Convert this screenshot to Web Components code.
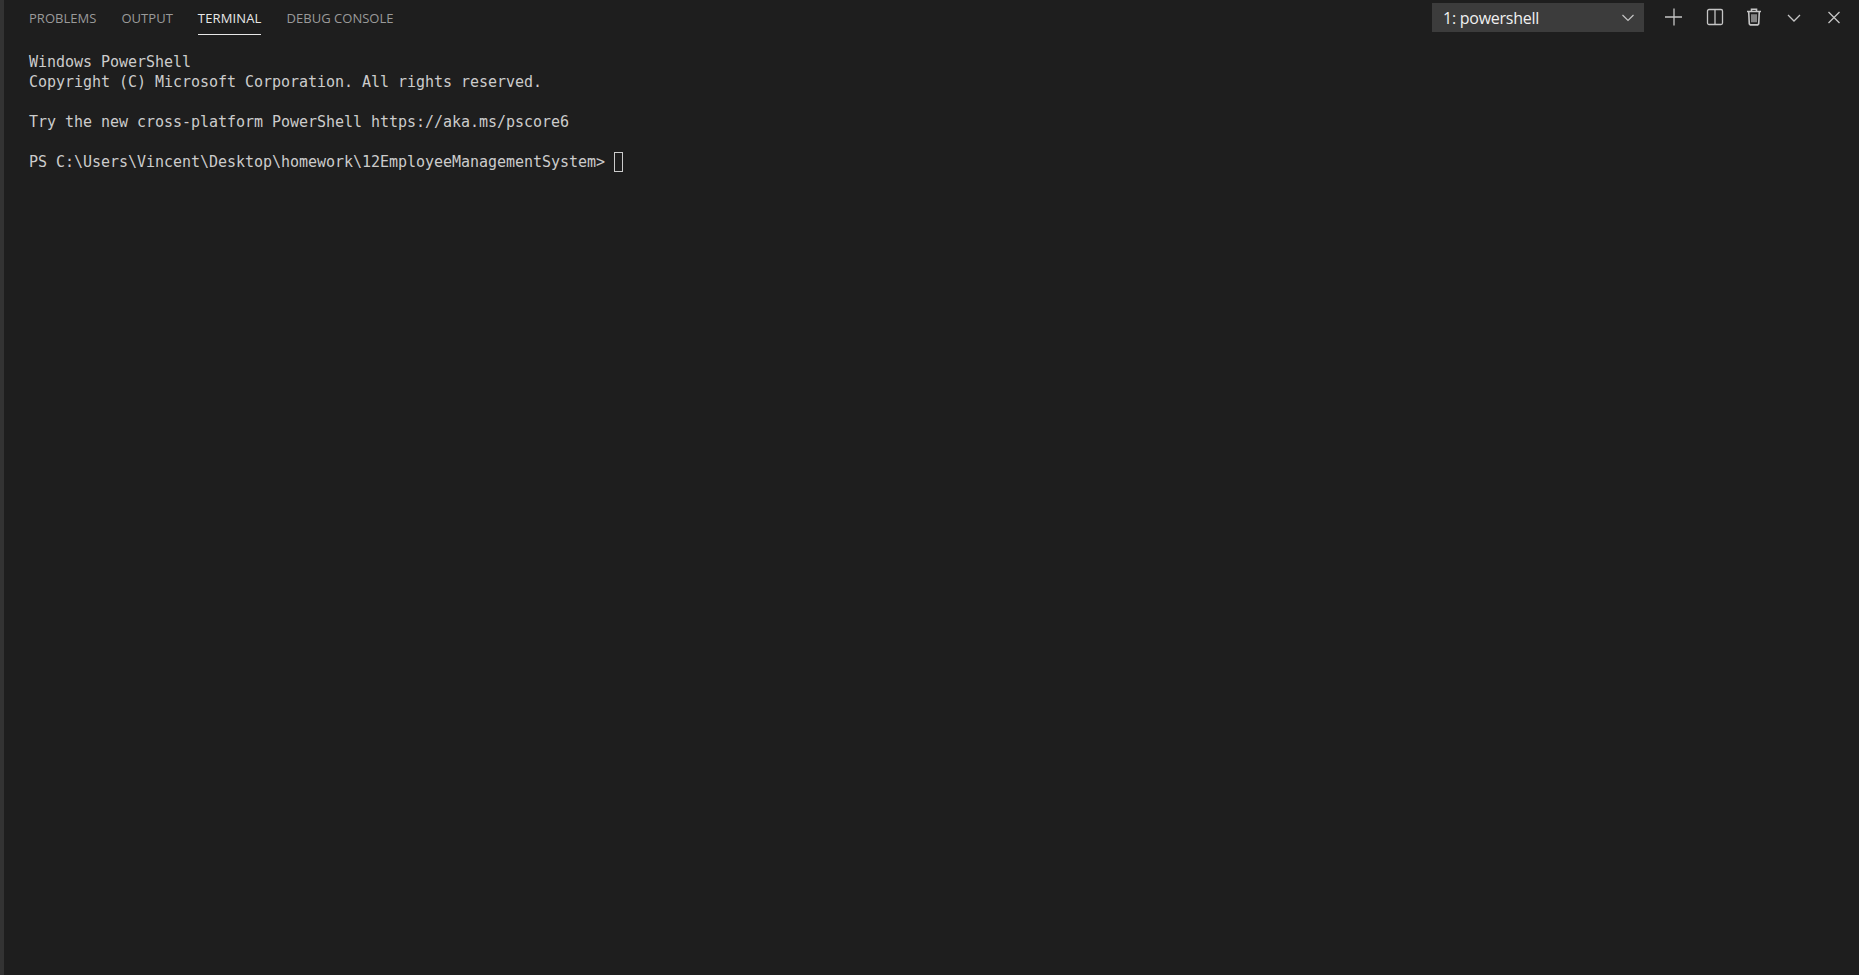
<!DOCTYPE html>
<html>
<head>
<meta charset="utf-8">
<title>Terminal</title>
<style>
  html, body { margin: 0; height: 100%; background: #1e1e1e; overflow: hidden; }
</style>
</head>
<body>
<terminal-panel>
  <panel-tab>PROBLEMS</panel-tab>
  <panel-tab>OUTPUT</panel-tab>
  <panel-tab active>TERMINAL</panel-tab>
  <panel-tab>DEBUG CONSOLE</panel-tab>
  <terminal-output>
<pre>Windows PowerShell
Copyright (C) Microsoft Corporation. All rights reserved.

Try the new cross-platform PowerShell https://aka.ms/pscore6

PS C:\Users\Vincent\Desktop\homework\12EmployeeManagementSystem&gt; <span class="cursor"></span></pre>
  </terminal-output>
</terminal-panel>

<script>
const tabTemplate = document.createElement('template')
tabTemplate.innerHTML = `
  <style>
    :host {
      display: block;
      height: 34px;
      box-sizing: border-box;
      padding-top: 9px;
      font: 13px/18px "Open Sans", sans-serif;
      letter-spacing: 0.03px;
      color: #9a9a9a;
    }
    :host([active]) {
      color: #e7e7e7;
      letter-spacing: 0.14px;
      border-bottom: 1px solid #e7e7e7;
      height: 35px;
    }
  </style>
  <slot></slot>
`

class PanelTab extends HTMLElement {
  constructor() {
    super()
    this.attachShadow({ mode: 'open' })
    this.shadowRoot.appendChild(tabTemplate.content.cloneNode(true))
  }
}
customElements.define('panel-tab', PanelTab)

const outputTemplate = document.createElement('template')
outputTemplate.innerHTML = `
  <style>
    :host {
      display: block;
      padding: 17px 0 0 25px;
      color: #cccccc;
    }
    ::slotted(pre) {
      margin: 0;
      font: 15px/20px "DejaVu Sans Mono", monospace;
      letter-spacing: -0.03px;
    }
  </style>
  <slot></slot>
`

class TerminalOutput extends HTMLElement {
  constructor() {
    super()
    this.attachShadow({ mode: 'open' })
    this.shadowRoot.appendChild(outputTemplate.content.cloneNode(true))
  }
}
customElements.define('terminal-output', TerminalOutput)

const dropdownTemplate = document.createElement('template')
dropdownTemplate.innerHTML = `
  <style>
    :host {
      display: flex;
      align-items: center;
      justify-content: space-between;
      width: 212px;
      height: 29px;
      box-sizing: border-box;
      padding: 2px 8px 0 11px;
      background: #3c3c3c;
      color: #f0f0f0;
      font: 16px "Open Sans", sans-serif;
      letter-spacing: -0.25px;
    }
    svg { display: block; }
  </style>
  <slot></slot>
  <svg width="16" height="16" viewBox="0 0 16 16" fill="none" stroke="#c5c5c5" stroke-width="1.2">
    <path d="M2.5 5 8 10.5 13.5 5"/>
  </svg>
`

class TerminalDropdown extends HTMLElement {
  constructor() {
    super()
    this.attachShadow({ mode: 'open' })
    this.shadowRoot.appendChild(dropdownTemplate.content.cloneNode(true))
  }
}
customElements.define('terminal-dropdown', TerminalDropdown)

const icons = {
  plus: '<path d="M10 1.5v17M1 10h17"/>',
  split: '<rect x="3.5" y="2.5" width="15" height="15" rx="1.5"/><path d="M11 2.5v15"/>',
  trash: '<path d="M3 4.5h14M7.5 4.5V2.2h5v2.3M4.7 4.5l.6 12.4 1 1h7.4l1-1 .6-12.4" stroke-width="1.6"/><path d="M8 7.2v8M10 7.2v8M12 7.2v8" stroke-width="1.2"/>',
  chevron: '<path d="M4 8 10 14 16 8"/>',
  close: '<path d="M4.5 5l11 11M15.5 5l-11 11"/>'
}

class ActionIcon extends HTMLElement {
  constructor() {
    super()
    this.attachShadow({ mode: 'open' })
  }

  connectedCallback() {
    this.shadowRoot.innerHTML = `
      <style>
        :host { display: block; width: 20px; height: 20px; }
        svg { display: block; }
      </style>
      <svg width="20" height="20" viewBox="0 0 20 20" fill="none" stroke="#c5c5c5" stroke-width="1.3">
        ${icons[this.getAttribute('name')]}
      </svg>
    `
  }
}
customElements.define('action-icon', ActionIcon)

const panelTemplate = document.createElement('template')
panelTemplate.innerHTML = `
  <style>
    :host {
      display: flex;
      height: 975px;
      background: #1e1e1e;
      border-left: 4px solid #333333;
      box-sizing: border-box;
    }
    #panel { flex: 1; display: flex; flex-direction: column; min-width: 0; }
    #header {
      display: flex;
      justify-content: space-between;
      align-items: flex-start;
      height: 35px;
    }
    #tabs { display: flex; gap: 25px; padding-left: 25px; }
    #actions { display: flex; align-items: center; height: 35px; padding-right: 15px; }
    #icons { display: flex; align-items: center; gap: 20px; margin-left: 20px; margin-top: -2px; }
    #dropdown { margin-top: -1px; }
  </style>
  <div id="panel">
    <div id="header">
      <div id="tabs"><slot name="tabs"></slot></div>
      <div id="actions">
        <terminal-dropdown id="dropdown">1: powershell</terminal-dropdown>
        <div id="icons">
          <action-icon name="plus"></action-icon>
          <action-icon name="split"></action-icon>
          <action-icon name="trash"></action-icon>
          <action-icon name="chevron"></action-icon>
          <action-icon name="close"></action-icon>
        </div>
      </div>
    </div>
    <slot></slot>
  </div>
`

class TerminalPanel extends HTMLElement {
  constructor() {
    super()
    this.attachShadow({ mode: 'open' })
    this.shadowRoot.appendChild(panelTemplate.content.cloneNode(true))
  }

  connectedCallback() {
    this.querySelectorAll('panel-tab').forEach(tab => tab.slot = 'tabs')
  }
}
customElements.define('terminal-panel', TerminalPanel)
</script>
<style>
  .cursor {
    display: inline-block;
    width: 9px;
    height: 20px;
    box-sizing: border-box;
    border: 1px solid #cccccc;
    vertical-align: -5px;
  }
</style>
</body>
</html>
